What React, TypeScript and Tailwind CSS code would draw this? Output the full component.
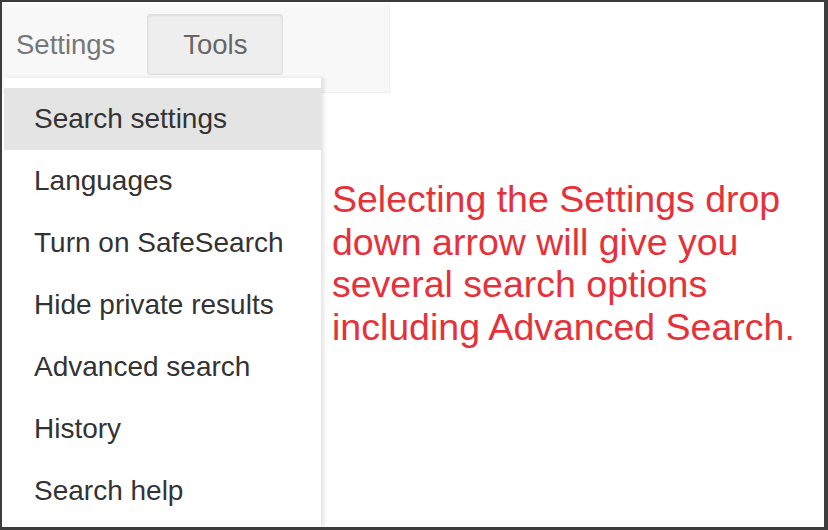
const menuItems = [
  'Search settings',
  'Languages',
  'Turn on SafeSearch',
  'Hide private results',
  'Advanced search',
  'History',
  'Search help',
];

const noteLines = [
  'Selecting the Settings drop',
  'down arrow will give you',
  'several search options',
  'including Advanced Search.',
];

export default function App() {
  return (
    <div className="w-[828px] h-[530px] bg-white font-['Liberation_Sans',Arial,sans-serif]">
      <div className="relative w-full h-full overflow-hidden border-t-2 border-l-2 border-r-4 border-b-[3px] border-[#3c3c3c] bg-white">
        {/* top bar */}
        <div className="mt-[2px] h-[89px] w-[388px] bg-[#f8f8f8] border-b border-r border-[#efefef] pt-[10px] pl-[14px] flex items-start">
          <div className="h-[61px] flex items-center text-[27.5px] text-[#777]">Settings</div>
          <div className="ml-[32px] h-[61px] w-[136px] flex items-center justify-center rounded-[3px] bg-[#eeeeee] border border-[#dedede] shadow-[inset_0_1px_2px_rgba(0,0,0,0.08)] text-[27.5px] text-[#666]">
            Tools
          </div>
        </div>

        {/* dropdown */}
        <div className="absolute left-[2px] top-[76px] bottom-0 w-[317px] bg-white pt-[10px] shadow-[3px_0_4px_rgba(0,0,0,0.1)]">
          {menuItems.map((item, i) => (
            <div
              key={item}
              className={
                i === 0
                  ? 'h-[62px] pl-[30px] flex items-center text-[28px] text-[#333] bg-[#e4e4e4]'
                  : 'h-[62px] pl-[30px] flex items-center text-[28px] text-[#333]'
              }
            >
              {item}
            </div>
          ))}
        </div>

        {/* note */}
        <div className="mt-[85px] ml-[330px] text-[37.5px] leading-[42.5px] text-[#e6313a]">
          {noteLines.map((line) => (
            <div key={line} className="whitespace-nowrap">{line}</div>
          ))}
        </div>
      </div>
    </div>
  );
}
